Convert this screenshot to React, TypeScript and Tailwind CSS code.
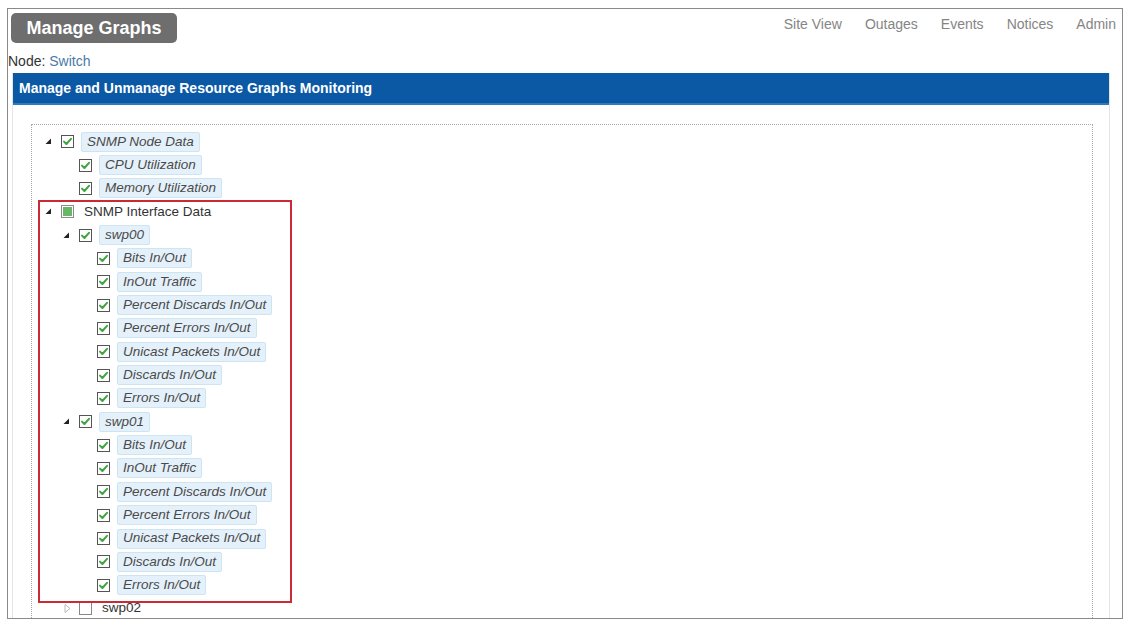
import React from 'react';

type Node = {
  label: string;
  level: number;
  expander?: 'open' | 'closed' | null;
  check: 'on' | 'partial' | 'off';
  plain?: boolean;
};

const ports = [
  'Bits In/Out',
  'InOut Traffic',
  'Percent Discards In/Out',
  'Percent Errors In/Out',
  'Unicast Packets In/Out',
  'Discards In/Out',
  'Errors In/Out',
];

const nodes: Node[] = [
  { label: 'SNMP Node Data', level: 0, expander: 'open', check: 'on' },
  { label: 'CPU Utilization', level: 1, check: 'on' },
  { label: 'Memory Utilization', level: 1, check: 'on' },
  { label: 'SNMP Interface Data', level: 0, expander: 'open', check: 'partial', plain: true },
  { label: 'swp00', level: 1, expander: 'open', check: 'on' },
  ...ports.map((p) => ({ label: p, level: 2, check: 'on' as const })),
  { label: 'swp01', level: 1, expander: 'open', check: 'on' },
  ...ports.map((p) => ({ label: p, level: 2, check: 'on' as const })),
  { label: 'swp02', level: 1, expander: 'closed', check: 'off', plain: true },
];

const navItems = ['Site View', 'Outages', 'Events', 'Notices', 'Admin'];

function Expander({ kind }: { kind?: 'open' | 'closed' | null }) {
  if (kind === 'open') {
    return (
      <svg width="7" height="7" viewBox="0 0 7 7" className="ml-[3px]">
        <polygon points="6,0.5 6,6 0.5,6" fill="#222" />
      </svg>
    );
  }
  if (kind === 'closed') {
    return (
      <svg width="7" height="9" viewBox="0 0 7 9" className="ml-[4px]">
        <polygon points="1,0.5 6,4.5 1,8.5" fill="none" stroke="#bbb" strokeWidth="1" />
      </svg>
    );
  }
  return null;
}

function CheckBox({ state }: { state: 'on' | 'partial' | 'off' }) {
  if (state === 'partial') {
    return (
      <svg width="13" height="13" viewBox="0 0 13 13">
        <rect x="0.5" y="0.5" width="12" height="12" fill="#fff" stroke="#8a8a8a" />
        <rect x="2" y="2" width="9" height="9" fill="#66b766" />
      </svg>
    );
  }
  return (
    <svg width="13" height="13" viewBox="0 0 13 13">
      <rect x="0.5" y="0.5" width="12" height="12" fill="#fff" stroke={state === 'off' ? '#888' : '#555'} />
      {state === 'on' && (
        <path d="M3 6.6 L5.4 9 L10 3.8" fill="none" stroke="#3fa43f" strokeWidth="2" strokeLinecap="round" strokeLinejoin="round" />
      )}
    </svg>
  );
}

export default function App() {
  return (
    <div className="w-[1129px] h-[620px] bg-white pt-[8px] pl-[7px] overflow-hidden" style={{ fontFamily: '"Liberation Sans", Arial, sans-serif' }}>
      <div className="w-[1116px] h-[611px] border border-[#8a8a8a] overflow-hidden flex flex-col">
        <div className="flex items-start justify-between">
          <div className="ml-[3px] mt-[4px] w-[166px] h-[30px] rounded-[5px] bg-[#6e6e6e] flex items-center justify-center text-white font-bold text-[18px]">
            Manage Graphs
          </div>
          <div className="flex gap-[23px] mt-[5px] mr-[6px] text-[14px] text-[#858585]">
            {navItems.map((n) => (
              <span key={n}>{n}</span>
            ))}
          </div>
        </div>

        <div className="mt-[9px] text-[14px] leading-[18px] text-[#333]">
          Node: <span className="text-[#4a7aa8]">Switch</span>
        </div>

        <div className="ml-[4px] mr-[12px] mt-[3px] flex-1 flex flex-col border-x border-[#e4e4e4]">
          <div className="h-[32px] bg-[#0b58a5] border-b-2 border-[#2d79c2] flex items-center pl-[6px] text-white font-bold text-[14px]">
            Manage and Unmanage Resource Graphs Monitoring
          </div>
          <div className="flex-1 pl-[18px] pr-[16px] pt-[19px]">
            <div className="relative h-[600px] border border-dotted border-[#a8a8a8] pt-[5px] pl-[10px]">
              {nodes.map((n, i) => (
                <div key={i} className="h-[23.35px] flex items-center" style={{ paddingLeft: n.level * 18 }}>
                  <div className="w-[19px] flex items-center">
                    <Expander kind={n.expander} />
                  </div>
                  <CheckBox state={n.check} />
                  {n.plain ? (
                    <span className="ml-[10px] text-[13.5px] text-[#333]">{n.label}</span>
                  ) : (
                    <span className="ml-[7px] h-[20px] flex items-center px-[5px] rounded-[2px] bg-[#e4f1fa] border border-[#cde4f3] italic text-[13.5px] text-[#4a4a4a]">
                      {n.label}
                    </span>
                  )}
                </div>
              ))}
              <div className="absolute left-[6px] top-[75px] w-[254px] h-[403px] border-2 border-[#c92a33] pointer-events-none" />
            </div>
          </div>
        </div>
      </div>
    </div>
  );
}
